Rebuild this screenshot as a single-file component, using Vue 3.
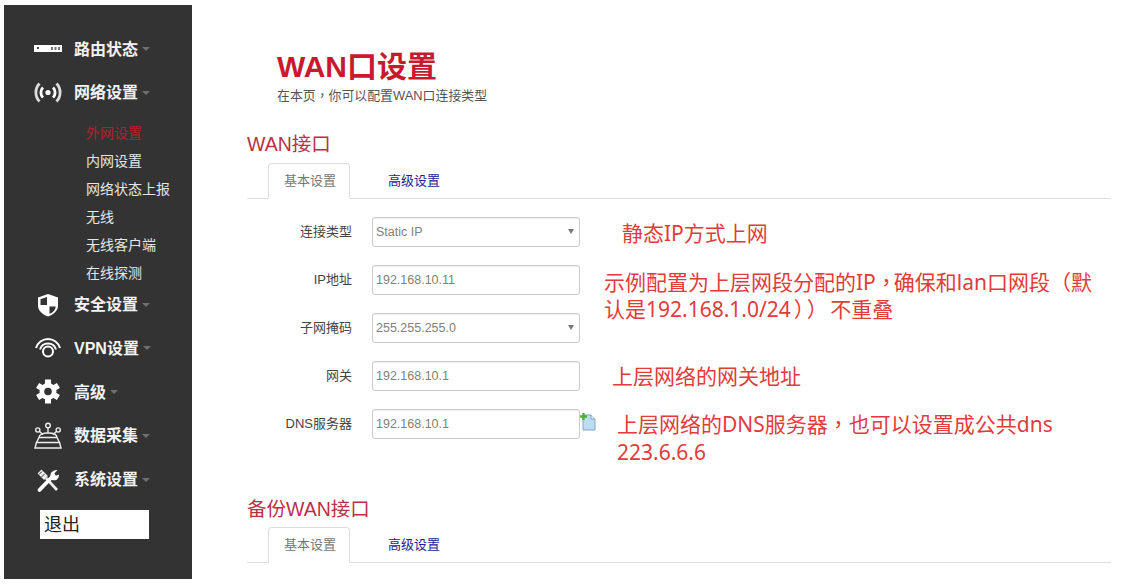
<script setup>
const menuTop = [
  { label: '路由状态', icon: 'router' },
  { label: '网络设置', icon: 'wireless' }
]
const subMenu = ['外网设置', '内网设置', '网络状态上报', '无线', '无线客户端', '在线探测']
const menuBottom = [
  { label: '安全设置', icon: 'shield' },
  { label: 'VPN设置', icon: 'vpn' },
  { label: '高级', icon: 'gear' },
  { label: '数据采集', icon: 'data' },
  { label: '系统设置', icon: 'tools' }
]
const gearTeeth = [0, 60, 120, 180, 240, 300]
const fields = [
  { label: '连接类型', value: 'Static IP', select: true },
  { label: 'IP地址', value: '192.168.10.11' },
  { label: '子网掩码', value: '255.255.255.0', select: true },
  { label: '网关', value: '192.168.10.1' },
  { label: 'DNS服务器', value: '192.168.10.1', add: true }
]
</script>

<template>
  <div class="page">
    <aside class="sidebar">
      <div v-for="item in menuTop" :key="item.label" class="menu-item">
        <svg class="menu-icon" viewBox="0 0 28 28">
          <template v-if="item.icon === 'router'">
            <rect x="0" y="10" width="28" height="7" fill="#fff" />
            <rect x="3" y="12" width="2" height="2" fill="#444" />
            <rect x="17" y="12" width="2" height="3" fill="#777" />
            <rect x="20.5" y="12" width="2" height="3" fill="#777" />
            <rect x="24" y="12" width="2" height="3" fill="#777" />
          </template>
          <template v-else>
            <circle cx="14" cy="13.5" r="2.6" fill="#fff" />
            <path d="M9 8.500a7 7 0 0 0 0 10M19 8.500a7 7 0 0 1 0 10" fill="none" stroke="#fff" stroke-width="2.800" />
            <path d="M5.500 4.500a13 13 0 0 0 0 18M22.500 4.500a13 13 0 0 1 0 18" fill="none" stroke="#ddd" stroke-width="2.800" />
          </template>
        </svg>
        <span class="menu-label">{{ item.label }}</span>
        <i class="caret"></i>
      </div>

      <ul class="sub-menu">
        <li v-for="(name, i) in subMenu" :key="name" :class="{ active: i === 0 }">{{ name }}</li>
      </ul>

      <div v-for="item in menuBottom" :key="item.label" class="menu-item">
        <svg class="menu-icon" viewBox="0 0 28 28">
          <template v-if="item.icon === 'shield'">
            <path d="M14 3l10 3.500v8c0 5.500-4.500 9-10 11-5.500-2-10-5.500-10-11v-8z" fill="#fff" />
            <path d="M13 6L6.500 8.200V14H13zM15.500 15.500V23c3.500-1.600 6-4 6.200-7.500z" fill="#333" />
          </template>
          <template v-else-if="item.icon === 'vpn'">
            <circle cx="14" cy="17.5" r="5" fill="none" stroke="#fff" stroke-width="2" />
            <path d="M6 15.500a8.300 8.300 0 0 1 16 0M2 14a12.500 12.500 0 0 1 24 0" fill="none" stroke="#fff" stroke-width="2" />
          </template>
          <template v-else-if="item.icon === 'gear'">
            <g transform="translate(14 13.5)">
              <rect v-for="a in gearTeeth" :key="a" x="-3" y="-12" width="6" height="7" fill="#fff" :transform="`rotate(${a})`" />
              <circle r="8.5" fill="#fff" />
              <circle r="3.8" fill="#333" />
            </g>
          </template>
          <template v-else-if="item.icon === 'data'">
            <g fill="none" stroke="#eee" stroke-width="1.4">
              <circle cx="14" cy="3.5" r="2.3" />
              <circle cx="3.8" cy="8" r="2.1" />
              <circle cx="24.2" cy="8" r="2.1" />
              <path d="M14 6v5M5.500 9.500l3.500 3M22.500 9.500l-3.500 3" />
              <path d="M5 15.500c0-3 4-4.500 9-4.500s9 1.500 9 4.500zM5 15.500L2.500 20.500h23L23 15.500M2.500 20.500L1 26h26l-1.500-5.500" />
            </g>
          </template>
          <template v-else>
            <path d="M5.500 5.500l6.500 6.500" fill="none" stroke="#eee" stroke-width="5.5" />
            <path d="M5 8.500l3-3M7.500 11l3-3" fill="none" stroke="#333" stroke-width="1" />
            <path d="M12 12l11 12" fill="none" stroke="#eee" stroke-width="2.6" />
            <path d="M5.500 24L18 11" fill="none" stroke="#fff" stroke-width="3.8" stroke-linecap="round" />
            <path d="M16.500 11.500c-1-4 2-8 7-7.500l-3 3.200 1.300 2.500 3.200-1.300c.5 4.500-4 7.500-7.500 5z" fill="#fff" />
          </template>
        </svg>
        <span class="menu-label">{{ item.label }}</span>
        <i class="caret"></i>
      </div>

      <div class="logout">退出</div>
    </aside>

    <main class="main">
      <h1 class="title">WAN口设置</h1>
      <p class="subtitle">在本页<span class="mid">，</span>你可以配置WAN口连接类型</p>

      <h2 class="section">WAN接口</h2>
      <div class="tabs">
        <a class="tab active">基本设置</a>
        <a class="tab">高级设置</a>
      </div>

      <div class="form">
        <div v-for="f in fields" :key="f.label" class="row">
          <label class="field-label">{{ f.label }}</label>
          <div class="control" :class="{ select: f.select }">
            <input class="input" type="text" :value="f.value" readonly />
          </div>
          <svg v-if="f.add" class="add-icon" viewBox="0 0 16 18">
            <path d="M3 2h8l4 4v11H3z" fill="#bcdcf2" stroke="#7fa6c0" stroke-width="1" />
            <path d="M11 2v4h4" fill="#e8f4fc" stroke="#7fa6c0" stroke-width="1" />
            <path d="M3.500 0v7M0 3.500h7" stroke="#4fae3c" stroke-width="2.4" />
          </svg>
        </div>
      </div>

      <h2 class="section second">备份WAN接口</h2>
      <div class="tabs">
        <a class="tab active">基本设置</a>
        <a class="tab">高级设置</a>
      </div>

      <p class="note note-static">静态IP方式上网</p>
      <p class="note note-ip">示例配置为上层网段分配的IP<span class="mid tight">，</span>确保和lan口网段<span class="mid">（</span>默<br />认是192.168.1.0/24<span class="mid spread">））</span>不重叠</p>
      <p class="note note-gw">上层网络的网关地址</p>
      <p class="note note-dns">上层网络的DNS服务器<span class="mid">，</span>也可以设置成公共dns<br />223.6.6.6</p>
    </main>
  </div>
</template>

<style scoped>
.page {
  display: flex;
  align-items: flex-start;
  padding: 5px 0 0 4px;
  height: 580px;
  box-sizing: border-box;
  font-family: "Liberation Sans", "Noto Sans CJK SC", sans-serif;
  background: #fff;
  overflow: hidden;
}

.sidebar {
  width: 188px;
  height: 574px;
  flex: none;
  box-sizing: border-box;
  padding-top: 26px;
  background: #333;
  color: #f2f2f2;
}

.menu-item {
  display: flex;
  align-items: center;
  height: 36px;
  margin-bottom: 7.75px;
  padding-left: 30px;
  font-size: 16px;
  font-weight: 700;
}

.menu-icon {
  width: 28px;
  height: 28px;
  margin-right: 12px;
  flex: none;
}

.menu-label {
  margin-bottom: 3px;
}

.caret {
  width: 0;
  height: 0;
  margin: 0 0 0 4px;
  border-left: 4px solid transparent;
  border-right: 4px solid transparent;
  border-top: 4px solid #6f6f6f;
}

.sub-menu {
  list-style: none;
  margin: 0;
  padding: 0 0 0 82px;
  font-size: 14px;
  line-height: 28px;
  color: #e6e6e6;
}

.sub-menu li.active {
  color: #b3202f;
}

.logout {
  width: 109px;
  height: 29px;
  margin: 12.5px 0 0 36px;
  padding-left: 4px;
  box-sizing: border-box;
  background: #fff;
  color: #222;
  font-size: 18px;
  line-height: 31px;
  overflow: hidden;
}

.main {
  position: relative;
  flex: 1;
  padding: 42px 15px 0 55px;
}

.title {
  margin: 0 0 0 30px;
  font-size: 30px;
  line-height: 40px;
  font-weight: 700;
  color: #c8192f;
}

.subtitle {
  margin: 0 0 0 30px;
  font-size: 12.9px;
  line-height: 18px;
  color: #555;
}

/* centred full-width punctuation, as the original font draws it */
.mid {
  font-family: "Noto Sans", "Noto Sans CJK TC", sans-serif;
  line-height: 0;
}

.mid.tight {
  letter-spacing: -3px;
}

.mid.spread {
  padding-left: 3px;
  letter-spacing: 2.5px;
}

.section {
  margin: 26px 0 6px;
  font-size: 19.5px;
  line-height: 26px;
  font-weight: 400;
  color: #bb2f47;
}

.section.second {
  margin-top: 57px;
  margin-bottom: 5px;
}

.tabs {
  display: flex;
  height: 36px;
  padding-left: 21px;
  box-sizing: border-box;
  border-bottom: 1px solid #ddd;
  font-size: 13px;
}

.tab {
  height: 36px;
  padding: 0 15px;
  box-sizing: border-box;
  line-height: 34px;
  color: #1c1c96;
  border: 1px solid transparent;
}

.tab.active {
  width: 82px;
  margin-right: 22px;
  padding: 0 13px 0 15px;
  color: #777;
  background: #fff;
  border-color: #ddd #ddd #fff;
  border-radius: 4px 4px 0 0;
  white-space: nowrap;
}

.form {
  display: flex;
  flex-direction: column;
  gap: 18px;
  margin-top: 18px;
}

.row {
  display: flex;
  align-items: center;
  height: 30px;
  position: relative;
}

.field-label {
  width: 105px;
  margin-bottom: 3px;
  text-align: right;
  font-size: 13px;
  color: #444;
}

.control {
  position: relative;
  width: 208px;
  margin-left: 20px;
}

.input {
  display: block;
  width: 100%;
  height: 30px;
  padding: 0 3px;
  box-sizing: border-box;
  border: 1px solid #ccc;
  border-radius: 3px;
  box-shadow: inset 0 1px 1px rgba(0, 0, 0, 0.07);
  font-family: "Liberation Sans", sans-serif;
  font-size: 12.5px;
  color: #808080;
  outline: none;
}

.control.select::after {
  content: "";
  position: absolute;
  right: 6px;
  top: 12px;
  border-left: 3px solid transparent;
  border-right: 3px solid transparent;
  border-top: 5px solid #777;
}

.add-icon {
  width: 16px;
  height: 18px;
  align-self: flex-start;
  margin-top: 4px;
}

.note {
  position: absolute;
  margin: 0;
  font-family: "Noto Sans", "Noto Sans CJK SC", sans-serif;
  font-size: 21px;
  line-height: 27px;
  color: #e23b3b;
  white-space: nowrap;
}

.note-static {
  left: 430px;
  top: 215px;
}

.note-ip {
  left: 412px;
  top: 264px;
}

.note-gw {
  left: 420px;
  top: 358px;
}

.note-dns {
  left: 425px;
  top: 405px;
  line-height: 28px;
}
</style>

<style>
html,
body {
  margin: 0;
  background: #fff;
}
</style>
